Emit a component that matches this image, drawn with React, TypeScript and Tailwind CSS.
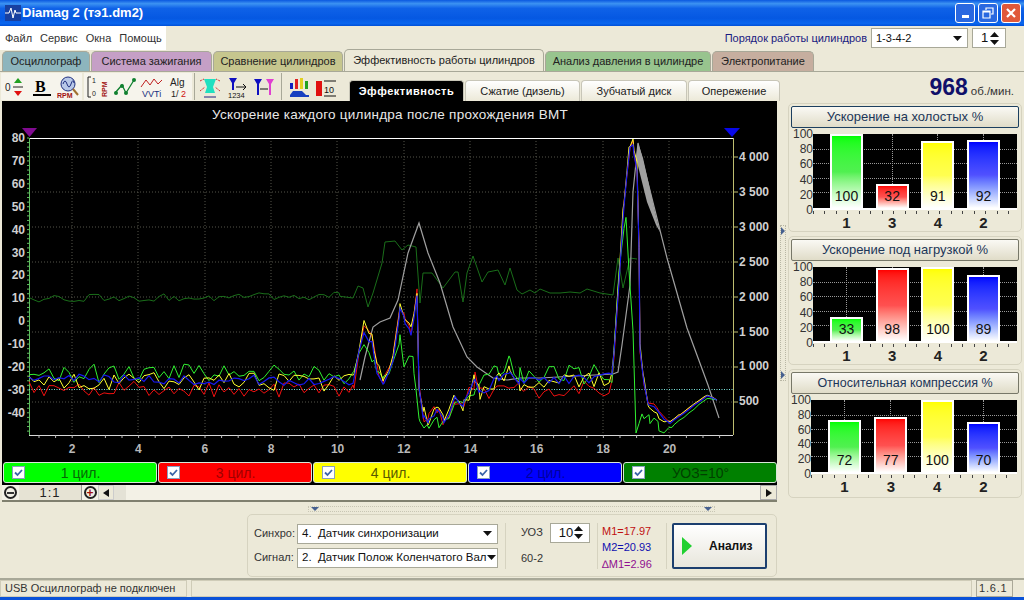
const FONT = "font-['Liberation_Sans',Arial,sans-serif]"

// --- chart data, all coordinates are page pixels (svg viewBox starts at 2,101) ---
type Pt = [number, number]

function rng(seed: number) {
  let s = seed * 7919
  return () => {
    s = (s * 16807) % 2147483647
    return (s % 10000) / 10000 - 0.5
  }
}

function toPoints(pts: Pt[]) {
  return pts.map((p) => `${p[0].toFixed(1)},${p[1].toFixed(1)}`).join(" ")
}

function interp(keys: Pt[], x: number) {
  for (let i = 1; i < keys.length; i++) {
    if (x <= keys[i][0]) {
      const [x0, y0] = keys[i - 1]
      const [x1, y1] = keys[i]
      return y0 + ((y1 - y0) * (x - x0)) / (x1 - x0 || 1)
    }
  }
  return keys[keys.length - 1][1]
}

function noisy(keys: Pt[], seed: number, amp: number) {
  const r = rng(seed)
  const out: Pt[] = []
  const xs = new Set<number>(keys.map((k) => k[0]))
  for (let x = 29; x < keys[keys.length - 1][0]; x += 5) xs.add(x)
  const sorted = [...xs].sort((a, b) => a - b)
  for (const x of sorted) {
    let a = amp
    if (x > 355 && x < 420) a = amp * 0.6
    if (x > 612 && x < 640) a = amp * 0.6
    if (x > 640 && x < 665) a = amp * 0.6
    if (x >= 665) a = amp * 0.08
    out.push([x, Math.min(433, Math.max(139, interp(keys, x) + r() * a * 2))])
  }
  return out
}

const shape = (flat: number, dy: number): Pt[] => [
  [29, flat], [353, flat + 3], [364, 327 + dy], [372, 340 + dy], [377, 367 + dy], [383, 383 + dy],
  [393, 357 + dy], [400, 307 + dy], [405, 317 + dy], [411, 330 + dy], [417, 293 + dy], [419, 387],
  [423, 413], [428, 422], [437, 410], [443, 420], [455, 400], [463, 403], [475, 380], [480, 395],
  [497, flat], [510, flat - 6], [520, flat + 3], [612, flat], [618, 292 + dy], [623, 215 + dy],
  [627, 172 + dy], [630, 145 + dy], [633, 142 + dy], [637, 168 + dy], [639, 248 + dy], [640, 348],
  [643, 375], [648, 402], [657, 412], [670, 422 + dy / 4], [680, 415 + dy / 4], [707, 395 + dy / 4], [717, 400],
]

const redLine = noisy(shape(388, 0), 11, 8)
const yellowLine = noisy(shape(380, -2), 23, 9)
const blueLine = noisy(shape(378, 4), 37, 5)
const greenLine = noisy(
  [
    [29, 374], [353, 374], [364, 345], [372, 360], [377, 372], [383, 378], [393, 365], [400, 337],
    [403, 363], [413, 357], [416, 390], [420, 423], [427, 433], [437, 424], [455, 405], [475, 385],
    [497, 374], [510, 364], [520, 376], [612, 374], [620, 258], [626, 220], [633, 325], [636, 432],
    [642, 418], [650, 418], [658, 427], [672, 427], [707, 398], [717, 400],
  ],
  51,
  10,
)

const uozHead = noisy([[29, 298], [340, 296]], 71, 4)
const uozTail: Pt[] = [
  [353, 298], [358, 286], [363, 288], [368, 307], [373, 293], [382, 263], [385, 242], [395, 241],
  [402, 250], [408, 245], [416, 247], [420, 303], [423, 273], [432, 273], [443, 288], [455, 272],
  [458, 272], [463, 302], [467, 273], [473, 256], [482, 282], [488, 272], [498, 270], [505, 285],
  [510, 268], [517, 290], [522, 294], [530, 290], [535, 293], [540, 289], [550, 293], [560, 293],
  [570, 292], [580, 293], [587, 289], [600, 293], [613, 295], [618, 258], [623, 288], [630, 258], [637, 259],
]

const rpmLine: Pt[] = [
  [360, 380], [365, 357], [373, 327], [380, 322], [390, 318], [398, 300], [408, 253], [419, 223],
  [428, 253], [440, 283], [453, 327], [467, 357], [477, 367], [493, 378], [507, 380], [520, 378],
  [540, 378], [613, 374], [618, 372], [622, 345], [630, 285], [633, 192], [638, 143], [667, 258],
  [687, 328], [708, 385], [719, 418],
]

const hGrid = [157, 192, 227, 262, 297, 332, 367, 402]
const vGrid = [72, 138, 205, 271, 337, 404, 470, 536, 603, 669]
const leftLabels = [80, 70, 60, 50, 40, 30, 20, 10, 0, -10, -20, -30, -40]
const rightLabels = ["4 000", "3 500", "3 000", "2 500", "2 000", "1 500", "1 000", "500"]
const bottomLabels = [2, 4, 6, 8, 10, 12, 14, 16, 18, 20]

function MainChart() {
  const minorLeft = Array.from({ length: 65 }, (_, i) => 138 + i * 4.58)
  const minorBottom = Array.from({ length: 42 }, (_, i) => 39 + i * 16.6)
  return (
    <svg viewBox="2 101 775 359" className="block w-[775px] h-[359px] bg-black">
      <text x="390" y="119" fill="#e8e8e8" fontSize="13.5" textAnchor="middle" letterSpacing="0.25">
        Ускорение каждого цилиндра после прохождения ВМТ
      </text>

      {hGrid.map((y) => (
        <line key={y} x1="29" x2="733" y1={y} y2={y} stroke="#55554a" strokeDasharray="1 2" />
      ))}
      {vGrid.map((x) => (
        <line key={x} x1={x} x2={x} y1="138" y2="435" stroke="#55554a" strokeDasharray="1 2" />
      ))}

      <line x1="29" x2="733" y1="138.5" y2="138.5" stroke="#fff" />
      <line x1="29" x2="733" y1="435.5" y2="435.5" stroke="#d8d8d8" />
      <line x1="29.5" x2="29.5" y1="138" y2="435" stroke="#5fbf5f" />
      <line x1="733.5" x2="733.5" y1="138" y2="435" stroke="#bdbd70" />
      <line x1="29" x2="733" y1="389.5" y2="389.5" stroke="#7fe8e0" strokeDasharray="1 1.5" />

      {minorLeft.map((y) => (
        <line key={y} x1="27" x2="29" y1={y} y2={y} stroke="#5fbf5f" />
      ))}
      {minorBottom.map((x) => (
        <line key={x} x1={x} x2={x} y1="435" y2="438" stroke="#bbb" />
      ))}
      {hGrid.map((y) => (
        <line key={y} x1="733" x2="738" y1={y} y2={y} stroke="#bdbd70" />
      ))}

      {leftLabels.map((v, i) => (
        <text key={v} x="25" y={142 + i * 22.9} fill="#d0d0d0" fontSize="12" fontWeight="bold" textAnchor="end">
          {v}
        </text>
      ))}
      {rightLabels.map((v, i) => (
        <text key={v} x="739" y={161 + i * 34.9} fill="#d0d0d0" fontSize="12" fontWeight="bold">
          {v}
        </text>
      ))}
      {bottomLabels.map((v, i) => (
        <text key={v} x={72 + i * 66.4} y="453" fill="#b8b8b8" fontSize="12" fontWeight="bold" textAnchor="middle">
          {v}
        </text>
      ))}

      <polyline points={toPoints([...uozHead, ...uozTail])} fill="none" stroke="#1a6e1a" strokeWidth="1" />
      <polyline points={toPoints(rpmLine)} fill="none" stroke="#a0a0a0" strokeWidth="1.2" />
      <polygon points="638,143 643,158 655,212 660,232 656,225 647,202 636,158" fill="#a0a0a0" />
      <polyline points={toPoints(redLine)} fill="none" stroke="#f01010" strokeWidth="1" />
      <polyline points={toPoints(greenLine)} fill="none" stroke="#30f030" strokeWidth="1" />
      <polyline points={toPoints(yellowLine)} fill="none" stroke="#ffff30" strokeWidth="1" />
      <polyline points={toPoints(blueLine)} fill="none" stroke="#1818f0" strokeWidth="1.2" />

      <polygon points="22,128 37,128 29.5,137" fill="#800a90" />
      <polygon points="724,128 740,128 732,137" fill="#0808e8" />
    </svg>
  )
}

// --- small windows controls ---
function Arrow({ up = false }: { up?: boolean }) {
  return (
    <svg viewBox="0 0 9 5" className="w-[9px] h-[5px] block shrink-0">
      <polygon points={up ? "4.5,0 9,5 0,5" : "0,0 9,0 4.5,5"} fill="#111" />
    </svg>
  )
}

function Combo({ text, className, textCls = "text-[11.5px]" }: { text: string; className: string; textCls?: string }) {
  return (
    <div className={`h-5 bg-white border border-[#a8a898] flex items-center justify-between pl-1 pr-[5px] ${className}`}>
      <span className={`${textCls} text-[#111] whitespace-pre`}>{text}</span>
      <Arrow />
    </div>
  )
}

function Spin({ value, className }: { value: string; className: string }) {
  return (
    <div className={`h-5 bg-white border border-[#a8a898] flex items-center justify-between pl-2 pr-1 ${className}`}>
      <span className="text-[13px] text-[#111]">{value}</span>
      <div className="flex flex-col gap-[3px] pr-[2px]">
        <Arrow up />
        <Arrow />
      </div>
    </div>
  )
}

function Check() {
  return (
    <div className="w-[13px] h-[13px] bg-white border border-[#8aa0c0] flex items-center justify-center shrink-0">
      <svg viewBox="0 0 9 9" className="w-[9px] h-[9px]">
        <path d="M1 4.5 L3.5 7 L8 2" fill="none" stroke="#3a64a8" strokeWidth="1.8" />
      </svg>
    </div>
  )
}

const outerTabs = [
  { label: "Осциллограф", cls: "w-[88px] bg-[#8db5bd] h-[20px]" },
  { label: "Система зажигания", cls: "w-[121px] bg-[#c59fc6] h-[20px]" },
  { label: "Сравнение цилиндров", cls: "w-[130px] bg-[#c6c68e] h-[20px]" },
  { label: "Эффективность работы цилиндров", cls: "w-[200px] bg-[#ece9d8] h-[22px]" },
  { label: "Анализ давления в цилиндре", cls: "w-[166px] bg-[#98c48e] h-[20px]" },
  { label: "Электропитание", cls: "w-[102px] bg-[#c6ae9f] h-[20px]" },
]

const innerTabs = [
  { label: "Эффективность", cls: "w-[115px] bg-black text-white font-bold tracking-[0.5px]" },
  { label: "Сжатие (дизель)", cls: "w-[115px] bg-gradient-to-b from-white to-[#ece9d8] text-[#222]" },
  { label: "Зубчатый диск", cls: "w-[106px] bg-gradient-to-b from-white to-[#ece9d8] text-[#222]" },
  { label: "Опережение", cls: "w-[92px] bg-gradient-to-b from-white to-[#ece9d8] text-[#222]" },
]

const legend = [
  { label: "1 цил.", cls: "bg-[#00ff00] text-[#066a06]" },
  { label: "3 цил.", cls: "bg-[#ff0000] text-[#a00000]" },
  { label: "4 цил.", cls: "bg-[#ffff00] text-[#5a5a00]" },
  { label: "2 цил.", cls: "bg-[#0000ff] text-[#0000a0]" },
  { label: "УОЗ=10°", cls: "bg-[#008000] text-[#004000]" },
]

// --- toolbar glyphs ---
function ToolIcon({ children, light = true }: { children: React.ReactNode; light?: boolean }) {
  return (
    <div className={`w-[27px] h-[27px] flex items-center justify-center ${light ? "bg-[#f6f4ec]" : ""}`}>
      <svg viewBox="0 0 24 24" className="w-6 h-6">
        {children}
      </svg>
    </div>
  )
}

function Toolbar() {
  return (
    <div className="flex items-center pl-[1px] h-[27px] mb-[1px]">
      <ToolIcon>
        <text x="2" y="16" fontSize="10" fill="#222">0</text>
        <path d="M15 3 L19 8 L11 8 Z" fill="#20a020" />
        <path d="M15 21 L19 16 L11 16 Z" fill="#e01010" />
        <line x1="10" x2="20" y1="12" y2="12" stroke="#222" />
      </ToolIcon>
      <ToolIcon>
        <text x="5" y="17" fontSize="16" fontWeight="bold" fontFamily="'Liberation Serif',serif" fill="#000">B</text>
        <line x1="3" x2="21" y1="20" y2="20" stroke="#000" strokeWidth="2" />
      </ToolIcon>
      <ToolIcon>
        <circle cx="11" cy="9" r="7" fill="#b8c8e8" stroke="#203080" />
        <path d="M6 9 Q8 3 10 9 T14 9 T17 8" fill="none" stroke="#203080" />
        <line x1="16" y1="14" x2="21" y2="20" stroke="#a07030" strokeWidth="2" />
        <text x="0" y="23" fontSize="7" fontWeight="bold" fill="#a01010">RPM</text>
      </ToolIcon>
      <div className="w-[2px] h-[27px]" />
      <ToolIcon>
        <path d="M5 2 H2 V22 H5" fill="none" stroke="#222" />
        <text x="6" y="8" fontSize="7" fill="#222">1</text>
        <text x="6" y="21" fontSize="7" fill="#222">0</text>
        <text fontSize="7" fontWeight="bold" fill="#a01010" transform="translate(21,22) rotate(-90)">RPM</text>
      </ToolIcon>
      <ToolIcon>
        <path d="M2 18 L9 10 L13 18 L21 5" fill="none" stroke="#108030" strokeWidth="1.3" />
        <circle cx="3" cy="18" r="2" fill="#108030" />
        <circle cx="9" cy="11" r="2" fill="#108030" />
        <circle cx="13" cy="18" r="2" fill="#108030" />
        <circle cx="21" cy="5" r="2" fill="#108030" />
      </ToolIcon>
      <ToolIcon>
        <path d="M1 12 L6 5 L10 10 L14 4 L18 9 L22 5" fill="none" stroke="#c02020" />
        <text x="2" y="22" fontSize="9" fill="#203080">VVTi</text>
      </ToolIcon>
      <ToolIcon>
        <text x="3" y="11" fontSize="10" fill="#222">Alg</text>
        <text x="4" y="22" fontSize="9" fill="#222">1/</text>
        <text x="14" y="22" fontSize="9" fill="#d01010">2</text>
      </ToolIcon>
      <div className="w-[4px] flex justify-center h-[27px]">
        <div className="w-[1px] h-full bg-[#a8a898]" />
      </div>
      <ToolIcon light={false}>
        <path d="M6 4 H18 L15 12 L17 18 H7 L9 12 Z" fill="#20e0c0" />
        <path d="M2 6 L6 4 M22 6 L18 4 M2 16 L7 12 M22 16 L17 12" stroke="#d03030" strokeDasharray="2 1" />
        <line x1="6" x2="18" y1="22" y2="22" stroke="#202080" />
      </ToolIcon>
      <ToolIcon light={false}>
        <path d="M4 3 H12 L9 8 V15 H7 V8 Z" fill="#1010c0" />
        <path d="M11 12 H21 M18 9 L21 12 L18 15" fill="none" stroke="#111" />
        <text x="3" y="23" fontSize="7.5" fill="#111">1234</text>
      </ToolIcon>
      <ToolIcon light={false}>
        <path d="M2 4 H10 L7 9 V20 H5 V9 Z" fill="#1010c0" />
        <path d="M14 4 H22 L19 9 V20 H17 V9 Z" fill="#e040d0" />
        <path d="M8 14 H16" stroke="#111" />
      </ToolIcon>
      <div className="w-[8px] flex justify-center h-[27px]">
        <div className="w-[1px] h-full bg-[#a8a898]" />
      </div>
      <ToolIcon light={false}>
        <rect x="3" y="8" width="3" height="6" fill="#1020c0" />
        <rect x="8" y="4" width="3" height="10" fill="#e02020" />
        <rect x="13" y="3" width="3" height="11" fill="#e0d020" />
        <rect x="18" y="6" width="3" height="8" fill="#20a020" />
        <path d="M3 20 L6 16 H15 L19 20 H22 V22 H3 Z" fill="#1840c0" />
      </ToolIcon>
      <ToolIcon light={false}>
        <rect x="2" y="6" width="6" height="15" fill="#e01010" />
        <line x1="10" x2="22" y1="6" y2="6" stroke="#111" />
        <line x1="10" x2="22" y1="21" y2="21" stroke="#111" />
        <text x="10" y="18" fontSize="9" fill="#111">10</text>
      </ToolIcon>
    </div>
  )
}

// --- right hand bar panels ---
function BarChart({ title, bars, focused, left, height, labelH, titleCls = "text-[13px]" }: {
  title: string
  bars: { name: string; value: number; cls: string }[]
  focused?: boolean
  left: string
  height: string
  labelH: string
  titleCls?: string
}) {
  return (
    <div className="border border-[#d6d3c0] rounded-[5px] px-[2px] pt-[2px] h-[129px]">
      <div
        className={`h-[22px] rounded-[2px] border flex items-center justify-center text-[#1c3658] bg-gradient-to-b from-[#faf9f4] to-[#e0dcc8] ${titleCls} ${
          focused ? "border-[#1c3f5f]" : "border-[#777768]"
        }`}
      >
        {title}
      </div>
      <div className="flex mt-[6px]">
        <div className={`${left} shrink-0`}>
          <div className={`${labelH} -mt-[4px] flex flex-col justify-between items-end text-xs text-[#333] leading-[8px]`}>
            {[100, 80, 60, 40, 20, 0].map((v) => (
              <span key={v}>{v}</span>
            ))}
          </div>
        </div>
        <div className="flex-1 mr-[2px]">
          <div className={`relative ${height} bg-black border-b-2 border-white flex justify-between items-end px-[17px]`}>
            <div className="absolute inset-0 flex flex-col justify-between py-[15px]">
              {[1, 2, 3, 4].map((l) => (
                <div key={l} className="border-t border-dotted border-[#999]" />
              ))}
            </div>
            <div className="absolute inset-0 flex justify-between px-[33px]">
              {bars.map((b) => (
                <div key={b.name} className="border-l border-dotted border-[#999]" />
              ))}
            </div>
            {bars.map((b) => (
              <div
                key={b.name}
                className={`relative w-[33px] border-2 border-b-0 border-white flex items-end justify-center pb-[2px] text-sm text-[#111] bg-gradient-to-b ${b.cls}`}
                style={{ height: `${b.value}%` }}
              >
                {b.value}
              </div>
            ))}
          </div>
          <div className="h-[3px] mt-[1px] bg-[repeating-linear-gradient(90deg,#444_0_1px,transparent_1px_11.5px)]" />
          <div className="flex justify-between px-[17px] mt-[1px]">
            {bars.map((b) => (
              <span key={b.name} className="w-[33px] text-center text-[15px] font-bold text-[#222] leading-4">
                {b.name}
              </span>
            ))}
          </div>
        </div>
      </div>
    </div>
  )
}

const barCls = {
  g: "from-[#00ff00] via-[#50f050] to-white",
  r: "from-[#ff0000] via-[#ff5050] to-white",
  y: "from-[#ffff00] via-[#ffff50] to-white",
  b: "from-[#0000ff] via-[#5050ff] to-white",
}

function makeBars(vals: number[]) {
  return [
    { name: "1", value: vals[0], cls: barCls.g },
    { name: "3", value: vals[1], cls: barCls.r },
    { name: "4", value: vals[2], cls: barCls.y },
    { name: "2", value: vals[3], cls: barCls.b },
  ]
}

export default function App() {
  return (
    <div className={`${FONT} w-[1024px] h-[600px] overflow-hidden flex flex-col bg-[#ece9d8] text-[11px]`}>
      {/* Title bar */}
      <div className="h-[26px] shrink-0 flex items-center justify-between pl-[5px] pr-[3px] bg-[linear-gradient(180deg,#0a58e0_0%,#3c92f2_14%,#0f62e8_32%,#0558e2_70%,#0a66ee_90%,#0050d8_100%)]">
        <div className="flex items-center gap-[1px]">
          <svg viewBox="0 0 16 16" className="w-4 h-4">
            <rect width="16" height="16" fill="#1840a0" />
            <path d="M0 8 H4 L6 3 L8 13 L10 5 L11 8 H16" fill="none" stroke="#fff" />
          </svg>
          <span className="text-white font-bold text-[13px]">Diamag 2 (тэ1.dm2)</span>
        </div>
        <div className="flex gap-[3px]">
          <div className="w-[20px] h-[20px] rounded-[3px] border border-white bg-[#2a68e0] flex items-end justify-center pb-[4px]">
            <div className="w-[7px] h-[3px] bg-white" />
          </div>
          <div className="w-[20px] h-[20px] rounded-[3px] border border-white bg-[#2a68e0] flex items-center justify-center">
            <svg viewBox="0 0 12 12" className="w-3 h-3">
              <path d="M4 3 V1 H11 V7 H9 M1 4 H8 V11 H1 Z M1 4 V5 H8" fill="none" stroke="#fff" strokeWidth="1.2" />
            </svg>
          </div>
          <div className="w-[20px] h-[20px] rounded-[3px] border border-white bg-[#e0583a] flex items-center justify-center">
            <svg viewBox="0 0 12 12" className="w-3 h-3">
              <path d="M2 2 L10 10 M10 2 L2 10" stroke="#fff" strokeWidth="2.2" />
            </svg>
          </div>
        </div>
      </div>

      {/* Menu row */}
      <div className="h-[24px] shrink-0 flex items-center justify-between pr-[18px]">
        <div className="w-[166px] h-full bg-white flex items-center gap-[8px] pl-[5px] text-[#333]">
          <span>Файл</span>
          <span>Сервис</span>
          <span>Окна</span>
          <span>Помощь</span>
        </div>
        <div className="flex items-center">
          <span className="text-[#1a1a80] mr-[4px]">Порядок работы цилиндров</span>
          <Combo text="1-3-4-2" textCls="text-[11px]" className="w-[97px] mr-[4px]" />
          <Spin value="1" className="w-[34px]" />
        </div>
      </div>

      {/* Outer tabs */}
      <div className="h-[22px] shrink-0 flex items-end pl-[2px] gap-[1px] border-b border-[#a8a898]">
        {outerTabs.map((t) => (
          <div
            key={t.label}
            className={`${t.cls} rounded-t-[5px] border border-b-0 border-[#a8a898] flex items-center justify-center text-[#222] whitespace-nowrap`}
          >
            {t.label}
          </div>
        ))}
      </div>

      {/* Toolbar + sub tabs + rpm */}
      <div className="h-[29px] shrink-0 flex items-end justify-between">
        <div className="flex items-end">
          <Toolbar />
          <div className="flex gap-[1px] ml-[10px] items-end">
            {innerTabs.map((t) => (
              <div
                key={t.label}
                className={`${t.cls} h-[21px] rounded-t-[4px] border border-b-0 border-[#c8c6b8] flex items-center justify-center whitespace-nowrap`}
              >
                {t.label}
              </div>
            ))}
          </div>
        </div>
        <div className="flex items-baseline gap-[3px] pr-[10px] pb-[1px]">
          <span className="text-[23px] leading-[26px] font-bold text-[#10106a]">968</span>
          <span className="text-[#333] text-[11.5px]">об./мин.</span>
        </div>
      </div>

      {/* Main */}
      <div className="flex-1 min-h-0 flex">
        <div className="w-[778px] pl-[2px] flex flex-col shrink-0">
          <MainChart />
          <div className="h-[25px] bg-black flex items-center gap-[1px] pl-[1px] w-[775px]">
            {legend.map((l) => (
              <div
                key={l.label}
                className={`${l.cls} w-[154px] h-[21px] rounded-[3px] border border-[#d8e8d8] flex items-center pl-[8px] text-sm`}
              >
                <Check />
                <span className="flex-1 text-center pr-[20px]">{l.label}</span>
              </div>
            ))}
          </div>
          <div className="h-[17px] w-[775px] flex items-center border-b-2 border-[#80806f] bg-[#f3f1e6]">
            <div className="w-[17px] flex justify-center">
              <div className="w-[13px] h-[13px] rounded-full border-2 border-[#222] flex items-center justify-center">
                <div className="w-[7px] h-[2px] bg-[#333]" />
              </div>
            </div>
            <div className="w-[63px] h-full bg-[#e6e3d4] border-r border-[#999] text-center text-[13px] leading-4 tracking-[1px] text-[#222]">1:1</div>
            <div className="w-[16px] flex justify-center">
              <div className="w-[13px] h-[13px] rounded-full border-2 border-[#222] flex items-center justify-center text-[#a01010] text-[12px] leading-none font-bold">+</div>
            </div>
            <div className="w-[16px] h-full border border-[#ccc] bg-[#ece9d8] flex items-center justify-center">
              <svg viewBox="0 0 6 8" className="w-[6px] h-2"><polygon points="6,0 6,8 0,4" fill="#111" /></svg>
            </div>
            <div className="w-[12px] h-full bg-[#e4e2d6]" />
            <div className="flex-1" />
            <div className="w-[17px] h-full border border-[#aaa] bg-[#ece9d8] flex items-center justify-center">
              <svg viewBox="0 0 6 8" className="w-[6px] h-2"><polygon points="0,0 0,8 6,4" fill="#111" /></svg>
            </div>
          </div>

          {/* Horizontal splitter */}
          <div className="mt-[4px] ml-[306px] w-[407px] h-[6px] border border-[#c8c6b4] border-dotted flex justify-between items-center px-[2px]">
            <svg viewBox="0 0 8 4" className="w-2 h-1"><polygon points="0,0 8,0 4,4" fill="#46608f" /></svg>
            <svg viewBox="0 0 8 4" className="w-2 h-1"><polygon points="0,0 8,0 4,4" fill="#46608f" /></svg>
          </div>

          {/* Bottom panel */}
          <div className="mt-[2px] ml-[245px] w-[530px] h-[63px] border border-[#d6d3c0] rounded-[5px] flex items-center text-[#333]">
            <div className="w-[257px] flex flex-col gap-1 pl-[6px] shrink-0">
              <div className="flex items-center justify-between pr-[7px]">
                <span>Синхро:</span>
                <Combo text="4.  Датчик синхронизации" className="w-[201px]" />
              </div>
              <div className="flex items-center justify-between pr-[7px]">
                <span>Сигнал:</span>
                <Combo text="2.  Датчик Полож Коленчатого Вал" className="w-[201px]" />
              </div>
            </div>
            <div className="w-[92px] h-[46px] border-l border-[#d6d3c0] flex flex-col justify-between pl-[15px]">
              <div className="flex items-center gap-[7px]">
                <span>УОЗ</span>
                <Spin value="10" className="w-[40px]" />
              </div>
              <span className="pb-[2px]">60-2</span>
            </div>
            <div className="w-[69px] h-[46px] border-l border-[#d6d3c0] pl-[4px] flex flex-col justify-between">
              <span className="text-[#c01010]">M1=17.97</span>
              <span className="text-[#1010b0]">M2=20.93</span>
              <span className="text-[#901090]">∆M1=2.96</span>
            </div>
            <div className="h-[46px] border-l border-[#d6d3c0] pl-[5px]">
              <div className="w-[95px] h-[46px] rounded-[2px] border-2 border-[#1c3f6f] bg-gradient-to-b from-white to-[#e8e6dc] flex items-center pl-[8px] gap-[17px]">
                <svg viewBox="0 0 10 18" className="w-[10px] h-[18px]"><polygon points="0,0 10,9 0,18" fill="#20d030" /></svg>
                <span className="font-bold text-xs text-[#111]">Анализ</span>
              </div>
            </div>
          </div>
        </div>

        {/* Vertical splitter */}
        <div className="w-[10px] shrink-0 flex justify-center pt-[124px]">
          <div className="w-[6px] h-[156px] border border-dotted border-[#b8b6a4] flex flex-col justify-between items-center py-[1px]">
            <svg viewBox="0 0 4 8" className="w-1 h-2"><polygon points="0,0 4,4 0,8" fill="#46608f" /></svg>
            <svg viewBox="0 0 4 8" className="w-1 h-2"><polygon points="0,0 4,4 0,8" fill="#46608f" /></svg>
          </div>
        </div>

        {/* Right panels */}
        <div className="flex-1 pr-[2px] flex flex-col gap-1 pt-[2px]">
          <BarChart title="Ускорение на холостых %" focused bars={makeBars([100, 32, 91, 92])} left="w-[22px]" height="h-[76px]" labelH="h-[84px]" />
          <BarChart title="Ускорение под нагрузкой %" bars={makeBars([33, 98, 100, 89])} left="w-[22px]" height="h-[76px]" labelH="h-[84px]" />
          <BarChart title="Относительная компрессия %" titleCls="text-[12.5px]" bars={makeBars([72, 77, 100, 70])} left="w-[20px]" height="h-[74px]" labelH="h-[82px]" />
        </div>
      </div>

      {/* Status bar */}
      <div className="h-[19px] shrink-0 flex border-t-2 border-[#a8a898] gap-[4px] text-[#333] pr-[11px]">
        <div className="w-[187px] border border-[#cfccb8] flex items-center pl-[4px] whitespace-nowrap">USB Осциллограф не подключен</div>
        <div className="flex-1 border border-[#cfccb8]" />
        <div className="w-[37px] border border-[#aaa898] flex items-center pl-[2px] tracking-[0.8px]">1.6.1</div>
      </div>
      <div className="h-[3px] shrink-0 bg-[#0a52d8]" />
    </div>
  )
}
